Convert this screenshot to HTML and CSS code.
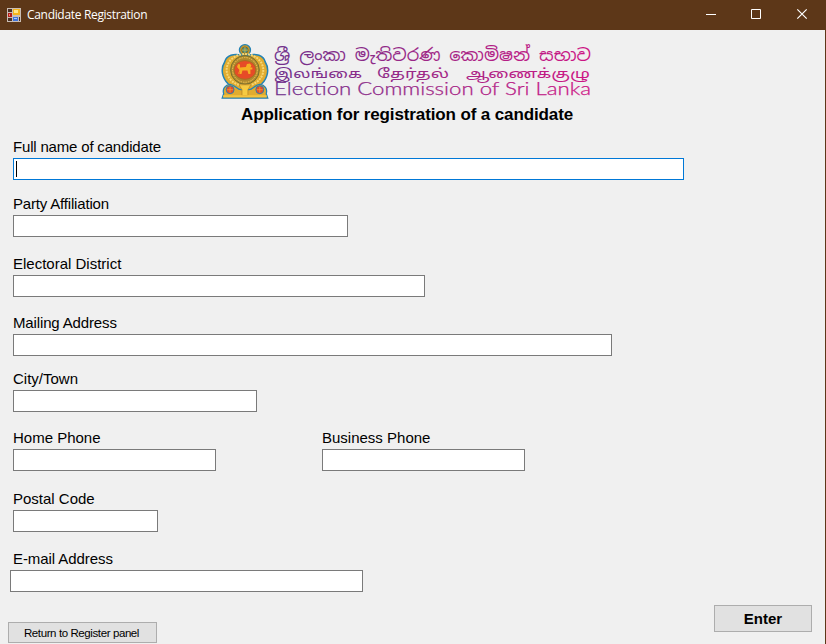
FILE: index.html
```html
<!DOCTYPE html>
<html lang="en">
<head>
<meta charset="utf-8">
<title>Candidate Registration</title>
<link rel="stylesheet" href="styles.css">
</head>
<body>
<div class="window">
  <header class="titlebar">
    <svg class="app-icon" width="14" height="14" viewBox="0 0 14 14" shape-rendering="crispEdges">
      <path fill="#c9bdb5" d="M0 0h14v14H0z"/>
      <path fill="#493024" d="M1 1h4v3H1zM1 10h4v3H1z"/>
      <path fill="#b51c16" d="M1 5h4v4H1z"/><path fill="#f08070" d="M2 6h1v2H2z"/>
      <path fill="#f5b51b" d="M6 1h7v6H6z"/><path fill="#ffe68a" d="M7 2h4v3H7z"/>
      <path fill="#3f73d8" d="M6 9h5v4H6z"/><path fill="#a9c8ff" d="M7 10h3v1H7z"/>
      <path fill="#493024" d="M12 9h1v4h-1z"/>
    </svg>
    <span class="caption">Candidate Registration</span>
    <svg class="controls" width="138" height="30" viewBox="0 0 138 30" fill="none" stroke="#fff">
      <path d="M18 14.500h10" /><path d="M63.500 9.500h9v9h-9z"/>
      <path d="M109.300 9.300l9.400 9.400M118.700 9.300l-9.400 9.400" stroke-width="1.200"/>
    </svg>
  </header>
  <main class="form">
    <svg class="logo" width="374" height="60" viewBox="0 0 374 60">
      <defs>
        <linearGradient id="ink" gradientUnits="userSpaceOnUse" x1="54" y1="0" x2="372" y2="0">
          <stop offset="0" stop-color="#71308c"/><stop offset=".5" stop-color="#a02686"/><stop offset="1" stop-color="#ce1684"/>
        </linearGradient>
      </defs>
      <g transform="translate(-.8 .2) scale(.99)">
      <g stroke="#2382b5">
        <path d="M25 14C13 10 6 14 4.500 20C0 27 2 36 8 42L15 48H35L42 42C48 36 50 27 45.500 20C44 14 37 10 25 14Z" fill="#e0ac30" stroke-width="1.500"/>
        <circle cx="25" cy="8" r="5.600" fill="#c99a2c" stroke-width="1.300"/>
        <path d="M2 56.500L3.500 52C2 47 5 43 10 42.500C15 43 17 48 21 48H29C33 48 35 43 40 42.500C45 43 48 47 46.500 52L48 56.500Z" fill="#e0ac30" stroke-width="1.300"/>
      </g>
      <circle cx="25" cy="8" r="3.200" fill="#3c8b91" stroke="#866e23"/>
      <path d="M25 5v6M22 8h6" stroke="#e4ba39" stroke-width=".8"/>
      <ellipse cx="25" cy="28" rx="18.500" ry="16" fill="none" stroke="#f7d675" stroke-width="2" stroke-dasharray="2 1"/>
      <circle cx="25" cy="28" r="14.500" fill="#ae892f" stroke="#77702f"/>
      <circle cx="25" cy="28" r="12.500" fill="none" stroke="#f2c754" stroke-dasharray="1.500 1"/>
      <ellipse cx="25" cy="28" rx="11" ry="9.500" fill="#e64b27" stroke="#a66f20"/>
      <path d="M18 32l1.500-4-2.500-3 1-3 2 .5 0 3 6-.5 1-3 3-.5 1.500 2-1 2 2 0v2h-2l0 4.500h-2l-1-3.500h-5l-1 3.500h-2l0-3-1 3z" fill="#f5ae22"/>
      <path d="M19 43h12l-3 5v6h-6v-6z" fill="#f5cb42" stroke="#b38023" stroke-width=".7"/>
      <g fill="#e94d27" stroke="#317eac"><circle cx="10" cy="48" r="4"/><circle cx="40" cy="48" r="4"/></g>
      <path d="M7 48h6M10 45v6M37 48h6M40 45v6" stroke="#ef9e34" stroke-width=".8"/>
      <path d="M3 54.500h44" stroke="#f6c43d" stroke-width="2"/>
      </g>
      <g fill="url(#ink)">
        <text class="sinhala" x="53" y="19" textLength="317" lengthAdjust="spacingAndGlyphs">ශ්‍රී ලංකා මැතිවරණ කොමිෂන් සභාව</text>
        <text class="tamil" x="53" y="36" textLength="88" lengthAdjust="spacingAndGlyphs">இலங்கை</text>
        <text class="tamil" x="156" y="36" textLength="72" lengthAdjust="spacingAndGlyphs">தேர்தல்</text>
        <text class="tamil" x="245" y="36" textLength="124" lengthAdjust="spacingAndGlyphs">ஆணைக்குழு</text>
        <text class="english" x="53" y="53" textLength="317" lengthAdjust="spacingAndGlyphs">Election Commission of Sri Lanka</text>
      </g>
    </svg>
    <h1>Application for registration of a candidate</h1>
    <div class="field name"><label>Full name of candidate</label><div class="box focused"><i class="caret"></i></div></div>
    <div class="field party"><label>Party Affiliation</label><div class="box"></div></div>
    <div class="field district"><label>Electoral District</label><div class="box"></div></div>
    <div class="field address"><label>Mailing Address</label><div class="box"></div></div>
    <div class="field city"><label>City/Town</label><div class="box"></div></div>
    <div class="phones">
      <div class="field"><label>Home Phone</label><div class="box"></div></div>
      <div class="field"><label>Business Phone</label><div class="box"></div></div>
    </div>
    <div class="field postal"><label>Postal Code</label><div class="box"></div></div>
    <div class="field email"><label>E-mail Address</label><div class="box"></div></div>
    <footer class="actions">
      <button class="return" type="button">Return to Register panel</button>
      <button class="enter" type="button">Enter</button>
    </footer>
  </main>
</div>
</body>
</html>
```
FILE: styles.css
```css
* { box-sizing: border-box; }
body { margin: 0; }
.window {
  width: 826px;
  height: 644px;
  overflow: hidden;
  background: #f0f0f0;
  border-right: 1px solid #5d3718;
  font-family: "Liberation Sans", Arial, sans-serif;
  color: #000;
}
.titlebar {
  display: flex;
  align-items: center;
  height: 30px;
  padding-left: 7px;
  background: #5d3718;
  color: #fff;
}
.caption {
  margin-left: 6px;
  font: 12px/30px "Open Sans", "Noto Sans", sans-serif;
  letter-spacing: -.32px;
}
.controls { margin-left: auto; margin-right: -1px; }
.form { padding: 12px 13px 0; }
.logo { display: block; margin-left: 208px; }
.sinhala { font: 17px "Noto Sans Sinhala", "Noto Sans", sans-serif; }
.tamil { font: 13px "Noto Sans Tamil", "Noto Sans", sans-serif; }
.english { font: 300 17.500px Lato, sans-serif; stroke: url(#ink); stroke-width: .25px; }
h1 {
  width: 334px;
  margin: 3px 0 12px 228px;
  font-size: 17px;
  line-height: 20px;
  white-space: nowrap;
  letter-spacing: -.12px;
}
.field { height: 43px; }
label {
  display: block;
  height: 21px;
  font-size: 15px;
  line-height: 20px;
}
.name label, .party label { letter-spacing: -.18px; }
.address label { letter-spacing: -.14px; }
.email label { letter-spacing: -.07px; }
.box {
  height: 22px;
  border: 1px solid #7a7a7a;
  background: #fff;
}
.focused { padding: 2px; border-color: #0078d7; }
.caret { display: block; width: 1px; height: 16px; background: #000; }
.name { width: 671px; }
.party { width: 335px; margin-top: 14px; }
.district { width: 412px; margin-top: 17px; }
.address { width: 599px; margin-top: 16px; }
.city { width: 244px; margin-top: 13px; }
.phones {
  display: grid;
  grid-template-columns: 203px 203px;
  gap: 106px;
  margin-top: 16px;
}
.postal { width: 145px; margin-top: 18px; }
.email { width: 353px; margin: 17px 0 0 -3px; }
.email label { padding-left: 3px; }
.actions {
  display: flex;
  justify-content: space-between;
  align-items: flex-start;
  margin: 13px 0 0 -5px;
}
button {
  padding: 0;
  border: 1px solid #adadad;
  background: #e1e1e1;
  color: #000;
  font-family: inherit;
}
.return { width: 149px; height: 21px; margin-top: 17px; padding-right: 2px; font-size: 11.500px; letter-spacing: -.4px; }
.enter { width: 98px; height: 27px; font-size: 15px; font-weight: bold; }
```
